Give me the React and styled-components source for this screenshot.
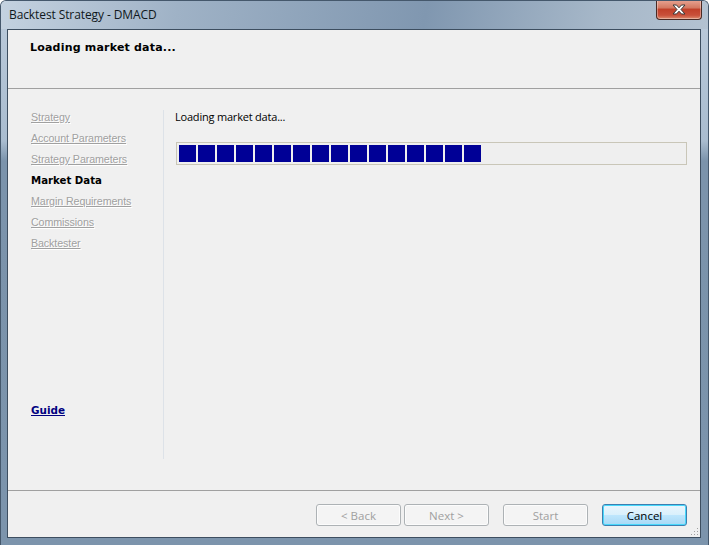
import styled, { createGlobalStyle } from "styled-components";

const GlobalStyle = createGlobalStyle`
  html, body {
    margin: 0;
    padding: 0;
    background: #ffffff;
  }
  * {
    box-sizing: border-box;
  }
`;

const steps = [
  { label: "Strategy" },
  { label: "Account Parameters" },
  { label: "Strategy Parameters" },
  { label: "Market Data", current: true },
  { label: "Margin Requirements" },
  { label: "Commissions" },
  { label: "Backtester" },
];

const blocks = Array.from({ length: 16 });

const App = () => {
  return (
    <>
      <GlobalStyle />
      <Window>
        <TitleBar>
          <Title>Backtest Strategy - DMACD</Title>
          <CloseButton>
            <svg width="16" height="11" viewBox="0 0 16 11">
              <path
                d="M2 1 L5.5 1 L8 3.8 L10.5 1 L14 1 L10 5.5 L14 10 L10.5 10 L8 7.2 L5.5 10 L2 10 L6 5.5 Z"
                fill="#ffffff"
                stroke="#3a3a3a"
                strokeWidth="1"
                strokeLinejoin="round"
              />
            </svg>
          </CloseButton>
        </TitleBar>
        <Frame>
          <Client>
            <Header>
              <HeaderTitle>Loading market data...</HeaderTitle>
            </Header>
            <Body>
              <Sidebar>
                <NavList>
                  {steps.map((s) =>
                    s.current ? (
                      <CurrentStep key={s.label}>{s.label}</CurrentStep>
                    ) : (
                      <StepLink key={s.label}>{s.label}</StepLink>
                    )
                  )}
                </NavList>
                <GuideLink>Guide</GuideLink>
              </Sidebar>
              <Content>
                <StatusText>Loading market data...</StatusText>
                <ProgressBar>
                  {blocks.map((_, i) => (
                    <Block key={i} />
                  ))}
                </ProgressBar>
              </Content>
            </Body>
            <Footer>
              <ButtonGroup>
                <Button disabled>&lt; Back</Button>
                <Button disabled>Next &gt;</Button>
              </ButtonGroup>
              <Button disabled>Start</Button>
              <Button $primary>Cancel</Button>
              <SizeGrip>
                <svg width="8" height="8" viewBox="0 0 8 8">
                  <rect x="6" y="0" width="1" height="1" fill="#a0a0a0" />
                  <rect x="3" y="3" width="1" height="1" fill="#a0a0a0" />
                  <rect x="6" y="3" width="1" height="1" fill="#a0a0a0" />
                  <rect x="0" y="6" width="1" height="1" fill="#a0a0a0" />
                  <rect x="3" y="6" width="1" height="1" fill="#a0a0a0" />
                  <rect x="6" y="6" width="1" height="1" fill="#a0a0a0" />
                </svg>
              </SizeGrip>
            </Footer>
          </Client>
        </Frame>
      </Window>
    </>
  );
};

const Window = styled.div`
  width: 709px;
  height: 545px;
  display: flex;
  flex-direction: column;
  border-radius: 6px 6px 0 0;
  overflow: hidden;
  background: linear-gradient(
    to bottom,
    #bccbdb 0px,
    #a9bccf 140px,
    #7b93ab 160px,
    #7c94ac 545px
  );
  border: 1px solid #45586c;
  border-bottom: none;
`;

const TitleBar = styled.div`
  height: 28px;
  flex-shrink: 0;
  display: flex;
  align-items: flex-start;
  justify-content: space-between;
  padding-left: 8px;
  background: linear-gradient(
    100deg,
    #c4d2e0 0%,
    #9fb2c6 25%,
    #8097b0 60%,
    #a7b8c9 85%,
    #b3c2d1 100%
  );
`;

const Title = styled.div`
  font-family: "Open Sans", "Noto Sans", sans-serif;
  font-size: 12px;
  color: #101820;
  padding-top: 5px;
  letter-spacing: -0.1px;
`;

const CloseButton = styled.div`
  width: 46px;
  height: 20px;
  margin-right: 6px;
  margin-top: -1px;
  border: 1px solid #4a2a24;
  border-top: none;
  border-radius: 0 0 4px 4px;
  background: linear-gradient(
    to bottom,
    #e8a493 0%,
    #d47a63 40%,
    #c1412a 50%,
    #c9503a 80%,
    #dd8c6e 100%
  );
  display: flex;
  align-items: center;
  justify-content: center;
  box-shadow: inset 0 0 0 1px rgba(255, 255, 255, 0.35);
`;

const Frame = styled.div`
  flex: 1;
  display: flex;
  padding: 0 7px 7px 6px;
`;

const Client = styled.div`
  flex: 1;
  display: flex;
  flex-direction: column;
  background: #f0f0f0;
  border: 1px solid #3d4e60;
  font-family: "Liberation Sans", Arial, sans-serif;
  font-size: 10.7px;
  color: #000;
  position: relative;
`;

const Header = styled.div`
  height: 59px;
  flex-shrink: 0;
  border-bottom: 1px solid #a0a0a0;
  padding: 11px 0 0 22px;
`;

const HeaderTitle = styled.div`
  font-family: "DejaVu Sans", Verdana, sans-serif;
  font-weight: bold;
  font-size: 11px;
  letter-spacing: 0.2px;
  color: #000;
`;

const Body = styled.div`
  flex: 1;
  display: flex;
  min-height: 0;
`;

const Sidebar = styled.div`
  width: 156px;
  flex-shrink: 0;
  display: flex;
  flex-direction: column;
  margin: 21px 0 31px;
  padding: 0 0 41px 23px;
  border-right: 1px solid #dde2e8;
`;

const NavList = styled.div`
  display: flex;
  flex-direction: column;
  gap: 7px;
`;

const StepLink = styled.span`
  line-height: 14px;
  color: #a0a0a0;
  text-decoration: underline;
  text-shadow: 1px 1px 0 #ffffff;
  align-self: flex-start;
  letter-spacing: -0.1px;
`;

const CurrentStep = styled.span`
  line-height: 15px;
  margin-bottom: -1px;
  font-family: "DejaVu Sans", Verdana, sans-serif;
  font-size: 10.2px;
  font-weight: bold;
  color: #000;
  align-self: flex-start;
`;

const GuideLink = styled.span`
  margin-top: auto;
  line-height: 15px;
  font-family: "DejaVu Sans", Verdana, sans-serif;
  font-size: 10.4px;
  font-weight: bold;
  color: #000080;
  text-decoration: underline;
  align-self: flex-start;
`;

const Content = styled.div`
  flex: 1;
  display: flex;
  flex-direction: column;
  padding: 21px 13px 0 11px;
`;

const StatusText = styled.div`
  font-family: "Open Sans", "Noto Sans", sans-serif;
  font-size: 11px;
  line-height: 14px;
  letter-spacing: -0.2px;
  margin-bottom: 18px;
`;

const ProgressBar = styled.div`
  height: 23px;
  margin-left: 1px;
  border: 1px solid #c9c6b8;
  padding: 2px;
  display: flex;
  gap: 2px;
  background: #efefef;
`;

const Block = styled.div`
  width: 17px;
  height: 17px;
  background: #000096;
`;

const Footer = styled.div`
  height: 47px;
  flex-shrink: 0;
  border-top: 1px solid #a0a0a0;
  display: flex;
  justify-content: flex-end;
  align-items: flex-start;
  gap: 14px;
  padding: 13px 13px 0 0;
  position: relative;
`;

const ButtonGroup = styled.div`
  display: flex;
  gap: 3px;
`;

const Button = styled.button`
  width: 85px;
  height: 22px;
  padding: 0;
  margin: 0;
  border-radius: 3px;
  font-family: "Open Sans", "Noto Sans", sans-serif;
  font-size: 11.5px;
  color: ${(p) => (p.disabled ? "#a0a0a0" : "#000")};
  border: 1px solid ${(p) => (p.$primary ? "#3c7fb1" : "#adb2b5")};
  background: ${(p) =>
    p.$primary
      ? "linear-gradient(to bottom, #eaf6fd 0%, #d9f0fc 50%, #bee6fd 51%, #a7d9f5 100%)"
      : "#f4f4f4"};
  box-shadow: ${(p) =>
    p.$primary ? "inset 0 0 0 1px #48d8fb" : "inset 0 0 0 1px #fcfcfc"};
`;

const SizeGrip = styled.div`
  position: absolute;
  right: 1px;
  bottom: 1px;
  width: 8px;
  height: 8px;
  display: flex;
`;

export default App;
